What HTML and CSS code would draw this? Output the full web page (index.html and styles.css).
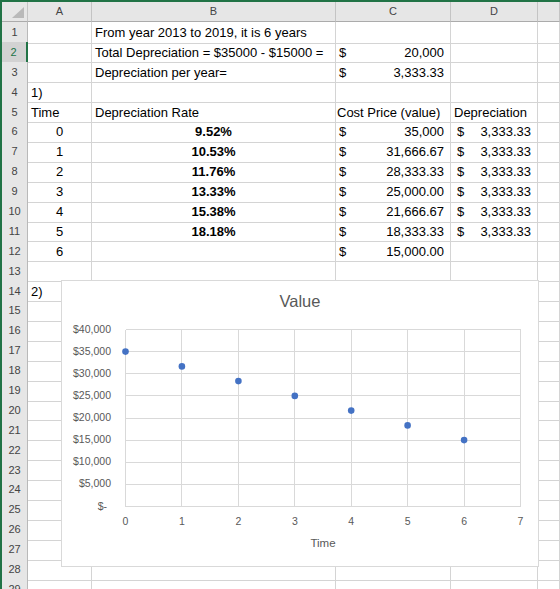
FILE: index.html
```html
<!DOCTYPE html>
<html lang="en">
<head>
  <meta charset="UTF-8">
  <title>Depreciation</title>
  <link rel="stylesheet" href="styles.css">
</head>
<body>
  <div class="sheet">
    <div class="row head">
      <div class="corner"><svg width="25" height="19"><polygon points="22,5 22,16 10,16" fill="#b9b9b9"/></svg></div>
      <div class="col">A</div>
      <div class="col">B</div>
      <div class="col">C</div>
      <div class="col">D</div>
      <div class="col"></div>
    </div>

    <div class="row">
      <div class="num">1</div>
      <div class="cell"></div>
      <div class="cell">From year 2013 to 2019, it is 6 years</div>
      <div class="cell"></div>
      <div class="cell"></div>
      <div class="cell"></div>
    </div>
    <div class="row">
      <div class="num active">2</div>
      <div class="cell"></div>
      <div class="cell">Total Depreciation = $35000 - $15000 =</div>
      <div class="cell money"><span>$</span><span>20,000</span></div>
      <div class="cell"></div>
      <div class="cell"></div>
    </div>
    <div class="row">
      <div class="num">3</div>
      <div class="cell"></div>
      <div class="cell">Depreciation per year=</div>
      <div class="cell money"><span>$</span><span>3,333.33</span></div>
      <div class="cell"></div>
      <div class="cell"></div>
    </div>
    <div class="row">
      <div class="num">4</div>
      <div class="cell">1)</div>
      <div class="cell"></div>
      <div class="cell"></div>
      <div class="cell"></div>
      <div class="cell"></div>
    </div>
    <div class="row">
      <div class="num">5</div>
      <div class="cell">Time</div>
      <div class="cell">Depreciation Rate</div>
      <div class="cell tight">Cost Price (value)</div>
      <div class="cell">Depreciation</div>
      <div class="cell"></div>
    </div>
    <div class="row">
      <div class="num">6</div>
      <div class="cell center">0</div>
      <div class="cell center bold">9.52%</div>
      <div class="cell money"><span>$</span><span>35,000</span></div>
      <div class="cell money dep"><span>$</span><span>3,333.33</span></div>
      <div class="cell"></div>
    </div>
    <div class="row">
      <div class="num">7</div>
      <div class="cell center">1</div>
      <div class="cell center bold">10.53%</div>
      <div class="cell money"><span>$</span><span>31,666.67</span></div>
      <div class="cell money dep"><span>$</span><span>3,333.33</span></div>
      <div class="cell"></div>
    </div>
    <div class="row">
      <div class="num">8</div>
      <div class="cell center">2</div>
      <div class="cell center bold">11.76%</div>
      <div class="cell money"><span>$</span><span>28,333.33</span></div>
      <div class="cell money dep"><span>$</span><span>3,333.33</span></div>
      <div class="cell"></div>
    </div>
    <div class="row">
      <div class="num">9</div>
      <div class="cell center">3</div>
      <div class="cell center bold">13.33%</div>
      <div class="cell money"><span>$</span><span>25,000.00</span></div>
      <div class="cell money dep"><span>$</span><span>3,333.33</span></div>
      <div class="cell"></div>
    </div>
    <div class="row">
      <div class="num">10</div>
      <div class="cell center">4</div>
      <div class="cell center bold">15.38%</div>
      <div class="cell money"><span>$</span><span>21,666.67</span></div>
      <div class="cell money dep"><span>$</span><span>3,333.33</span></div>
      <div class="cell"></div>
    </div>
    <div class="row">
      <div class="num">11</div>
      <div class="cell center">5</div>
      <div class="cell center bold">18.18%</div>
      <div class="cell money"><span>$</span><span>18,333.33</span></div>
      <div class="cell money dep"><span>$</span><span>3,333.33</span></div>
      <div class="cell"></div>
    </div>
    <div class="row">
      <div class="num">12</div>
      <div class="cell center">6</div>
      <div class="cell"></div>
      <div class="cell money"><span>$</span><span>15,000.00</span></div>
      <div class="cell"></div>
      <div class="cell"></div>
    </div>
    <div class="row">
      <div class="num">13</div>
      <div class="cell"></div><div class="cell"></div><div class="cell"></div><div class="cell"></div><div class="cell"></div>
    </div>
    <div class="row">
      <div class="num">14</div>
      <div class="cell">2)</div><div class="cell"></div><div class="cell"></div><div class="cell"></div><div class="cell"></div>
    </div>
    <div class="row">
      <div class="num">15</div>
      <div class="cell"></div><div class="cell"></div><div class="cell"></div><div class="cell"></div><div class="cell"></div>
    </div>
    <div class="row">
      <div class="num">16</div>
      <div class="cell"></div><div class="cell"></div><div class="cell"></div><div class="cell"></div><div class="cell"></div>
    </div>
    <div class="row">
      <div class="num">17</div>
      <div class="cell"></div><div class="cell"></div><div class="cell"></div><div class="cell"></div><div class="cell"></div>
    </div>
    <div class="row">
      <div class="num">18</div>
      <div class="cell"></div><div class="cell"></div><div class="cell"></div><div class="cell"></div><div class="cell"></div>
    </div>
    <div class="row">
      <div class="num">19</div>
      <div class="cell"></div><div class="cell"></div><div class="cell"></div><div class="cell"></div><div class="cell"></div>
    </div>
    <div class="row">
      <div class="num">20</div>
      <div class="cell"></div><div class="cell"></div><div class="cell"></div><div class="cell"></div><div class="cell"></div>
    </div>
    <div class="row">
      <div class="num">21</div>
      <div class="cell"></div><div class="cell"></div><div class="cell"></div><div class="cell"></div><div class="cell"></div>
    </div>
    <div class="row">
      <div class="num">22</div>
      <div class="cell"></div><div class="cell"></div><div class="cell"></div><div class="cell"></div><div class="cell"></div>
    </div>
    <div class="row">
      <div class="num">23</div>
      <div class="cell"></div><div class="cell"></div><div class="cell"></div><div class="cell"></div><div class="cell"></div>
    </div>
    <div class="row">
      <div class="num">24</div>
      <div class="cell"></div><div class="cell"></div><div class="cell"></div><div class="cell"></div><div class="cell"></div>
    </div>
    <div class="row">
      <div class="num">25</div>
      <div class="cell"></div><div class="cell"></div><div class="cell"></div><div class="cell"></div><div class="cell"></div>
    </div>
    <div class="row">
      <div class="num">26</div>
      <div class="cell"></div><div class="cell"></div><div class="cell"></div><div class="cell"></div><div class="cell"></div>
    </div>
    <div class="row">
      <div class="num">27</div>
      <div class="cell"></div><div class="cell"></div><div class="cell"></div><div class="cell"></div><div class="cell"></div>
    </div>
    <div class="row">
      <div class="num">28</div>
      <div class="cell"></div><div class="cell"></div><div class="cell"></div><div class="cell"></div><div class="cell"></div>
    </div>
    <div class="row">
      <div class="num">29</div>
      <div class="cell"></div><div class="cell"></div><div class="cell"></div><div class="cell"></div><div class="cell"></div>
    </div>

    <!-- scatter chart sits over the cells -->
    <div class="chart">
      <svg width="476" height="285">
        <text class="title" x="238" y="26" text-anchor="middle">Value</text>
        <g class="grid" shape-rendering="crispEdges">
          <line x1="63.5" y1="48.5" x2="458.5" y2="48.5"/>
          <line x1="63.5" y1="70.6" x2="458.5" y2="70.6"/>
          <line x1="63.5" y1="92.75" x2="458.5" y2="92.75"/>
          <line x1="63.5" y1="114.9" x2="458.5" y2="114.9"/>
          <line x1="63.5" y1="137" x2="458.5" y2="137"/>
          <line x1="63.5" y1="159.1" x2="458.5" y2="159.1"/>
          <line x1="63.5" y1="181.25" x2="458.5" y2="181.25"/>
          <line x1="63.5" y1="203.4" x2="458.5" y2="203.4"/>
          <line x1="63.5" y1="225.5" x2="458.5" y2="225.5"/>
          <line x1="63.5" y1="48.5" x2="63.5" y2="225.5"/>
          <line x1="119.9" y1="48.5" x2="119.9" y2="225.5"/>
          <line x1="176.4" y1="48.5" x2="176.4" y2="225.5"/>
          <line x1="232.8" y1="48.5" x2="232.8" y2="225.5"/>
          <line x1="289.2" y1="48.5" x2="289.2" y2="225.5"/>
          <line x1="345.6" y1="48.5" x2="345.6" y2="225.5"/>
          <line x1="402.1" y1="48.5" x2="402.1" y2="225.5"/>
          <line x1="458.5" y1="48.5" x2="458.5" y2="225.5"/>
        </g>
        <g class="axis" text-anchor="end">
          <text x="49" y="51.5">$40,000</text>
          <text x="49" y="73.6">$35,000</text>
          <text x="49" y="95.75">$30,000</text>
          <text x="49" y="117.9">$25,000</text>
          <text x="49" y="140">$20,000</text>
          <text x="49" y="162.1">$15,000</text>
          <text x="49" y="184.25">$10,000</text>
          <text x="49" y="206.4">$5,000</text>
          <text x="45" y="228.5">$-</text>
        </g>
        <g class="axis" text-anchor="middle">
          <text x="63.5" y="243.5">0</text>
          <text x="119.9" y="243.5">1</text>
          <text x="176.4" y="243.5">2</text>
          <text x="232.8" y="243.5">3</text>
          <text x="289.2" y="243.5">4</text>
          <text x="345.6" y="243.5">5</text>
          <text x="402.1" y="243.5">6</text>
          <text x="458.5" y="243.5">7</text>
        </g>
        <text class="axis-title" x="261" y="265.5" text-anchor="middle">Time</text>
        <g class="dots">
          <circle cx="63.5" cy="70.6" r="3.3"/>
          <circle cx="119.9" cy="85.4" r="3.3"/>
          <circle cx="176.4" cy="100.1" r="3.3"/>
          <circle cx="232.8" cy="114.9" r="3.3"/>
          <circle cx="289.2" cy="129.6" r="3.3"/>
          <circle cx="345.6" cy="144.4" r="3.3"/>
          <circle cx="402.1" cy="159.1" r="3.3"/>
        </g>
      </svg>
    </div>
  </div>
</body>
</html>
```

FILE: styles.css
```css
* {
  box-sizing: border-box;
}
body {
  margin: 0;
  font-family: "Liberation Sans", Arial, sans-serif;
  font-size: 13px;
  color: #000;
  background: #fff;
  overflow: hidden;
}
.sheet {
  position: relative;
  height: 589px;
  border-top: 2px solid #217346;
  border-left: 2px solid #217346;
}
.row {
  display: grid;
  grid-template-columns: 26px 64px 244px 115px 87px 1fr;
  height: 19.9px;
}
.row.head {
  height: 20px;
}
.corner, .col {
  background: #e6e6e6;
  border-right: 1px solid #c4c4c4;
  border-bottom: 1px solid #ababab;
  font-size: 11px;
  line-height: 19px;
  color: #444;
  text-align: center;
}
.corner svg {
  display: block;
}
.num {
  background: #e6e6e6;
  border-right: 1px solid #b9b9b9;
  border-bottom: 1px solid #d2d2d2;
  font-size: 11px;
  line-height: 19.5px;
  padding-top: 1px;
  color: #444;
  text-align: center;
}
.num.active {
  background: #d2d2d2;
  color: #217346;
  border-right: 2px solid #217346;
  padding-right: 1px;
}
.cell {
  border-right: 1px solid #d4d4d4;
  border-bottom: 1px solid #d4d4d4;
  padding: 1px 3px 0;
  line-height: 19.5px;
  white-space: nowrap;
}
.cell.tight {
  padding-left: 1px;
}
.center {
  text-align: center;
}
.bold {
  font-weight: bold;
}
.money {
  display: flex;
  justify-content: space-between;
  padding-right: 6px;
}
.money.dep {
  padding-left: 6px;
}

/* chart */
.chart {
  position: absolute;
  left: 59px;
  top: 278px;
  width: 478px;
  height: 287px;
  background: #fff;
  border: 1px solid #d9d9d9;
}
.chart svg {
  display: block;
}
.chart text {
  font-family: "Liberation Sans", Arial, sans-serif;
  fill: #595959;
}
.title {
  font-size: 16.5px;
}
.axis {
  font-size: 10.5px;
}
.axis-title {
  font-size: 11.5px;
}
.grid line {
  stroke: #d9d9d9;
  stroke-width: 1;
}
.dots circle {
  fill: #4472c4;
}
```
